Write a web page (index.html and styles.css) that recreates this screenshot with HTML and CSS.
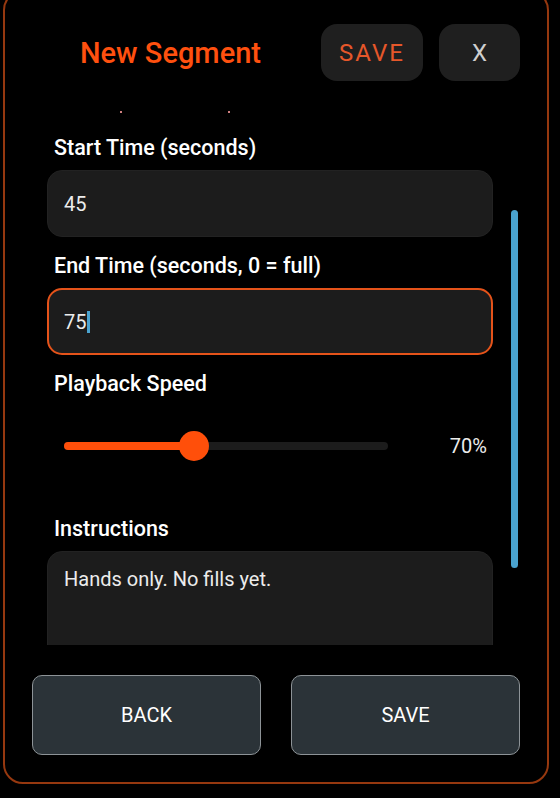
FILE: index.html
```html
<!DOCTYPE html>
<html lang="en">
<head>
  <meta charset="UTF-8">
  <meta name="viewport" content="width=device-width, initial-scale=1.0">
  <title>New Segment</title>
  <link rel="stylesheet" href="styles.css">
</head>
<body>

  <div class="dialog">
    <div class="dialog-header">
      <h1 class="title">New Segment</h1>
      <div class="header-actions">
        <button class="top-btn save">SAVE</button>
        <button class="top-btn close">X</button>
      </div>
    </div>

    <div class="scroll-view">
      <div class="scroll-content">
        <div class="crumbs">
          <span class="crumb"></span>
          <span class="crumb"></span>
        </div>

        <label class="field-label">Start Time (seconds)</label>
        <div class="input">45</div>

        <label class="field-label">End Time (seconds, 0 = full)</label>
        <div class="input focused">75<span class="caret"></span></div>

        <label class="field-label">Playback Speed</label>
        <div class="slider-row">
          <div class="slider">
            <div class="slider-fill" style="width: 40%"></div>
            <div class="slider-thumb" style="left: 40%"></div>
          </div>
          <span class="slider-value">70%</span>
        </div>

        <label class="field-label">Instructions</label>
        <div class="input textarea">Hands only. No fills yet.</div>
      </div>
      <div class="scrollbar"></div>
    </div>

    <div class="dialog-footer">
      <button class="footer-btn">BACK</button>
      <button class="footer-btn">SAVE</button>
    </div>
  </div>

</body>
</html>
```

FILE: styles.css
```css
* {
  margin: 0;
  padding: 0;
  box-sizing: border-box;
}

body {
  background-color: #000;
  color: #fff;
  font-family: Roboto, 'Noto Sans', sans-serif;
  overflow: hidden;
}

.dialog {
  margin: -10px 0 0 3px;
  width: 546px;
  height: 794px;
  border: 2px solid #96380f;
  border-radius: 20px;
  display: flex;
  flex-direction: column;
}

/* Header */
.dialog-header {
  display: flex;
  align-items: flex-start;
  padding: 32px 27px 0 75px;
  height: 103px;
}

.title {
  font-size: 29px;
  font-weight: 500;
  color: #ff500f;
  margin-top: 12px;
}

.header-actions {
  margin-left: auto;
  display: flex;
  gap: 16px;
}

.top-btn {
  height: 57px;
  border: none;
  border-radius: 16px;
  background-color: #1f1f1f;
  font-family: Roboto, sans-serif;
  font-size: 24px;
  cursor: pointer;
}

.top-btn.save {
  width: 102px;
  color: #e6572a;
  letter-spacing: 2px;
}

.top-btn.close {
  width: 81px;
  color: #cfcfcf;
}

/* Scroll area */
.scroll-view {
  position: relative;
  height: 550px;
  overflow: hidden;
}

.scroll-content {
  padding: 0 54px 0 42px;
}

.crumbs {
  height: 31px;
  position: relative;
}

.crumb {
  position: absolute;
  top: 16px;
  width: 2px;
  height: 2px;
  background-color: #d08080;
}

.crumb:first-child {
  left: 73px;
}

.crumb:last-child {
  left: 181px;
}

.field-label {
  display: block;
  font-size: 21.5px;
  font-weight: 500;
  padding-left: 7px;
  height: 44px;
  line-height: 44px;
}

.input {
  height: 67px;
  background-color: #1c1c1c;
  border: 1px solid #222;
  border-radius: 15px;
  padding-left: 16px;
  display: flex;
  align-items: center;
  font-size: 20px;
  color: #ececec;
  margin-bottom: 7px;
}

.input.focused {
  border: 2px solid #e5531a;
  padding-left: 15px;
}

.caret {
  display: inline-block;
  width: 3px;
  height: 22px;
  background-color: #4aa3cf;
  margin-left: 1px;
}

/* Slider */
.slider-row {
  display: flex;
  align-items: center;
  height: 101px;
  padding: 0 6px 22px 17px;
}

.slider {
  position: relative;
  width: 324px;
  height: 8px;
  border-radius: 4px;
  background-color: #1c1c1c;
}

.slider-fill {
  height: 100%;
  border-radius: 4px;
  background-color: #ff4f0a;
}

.slider-thumb {
  position: absolute;
  top: 50%;
  width: 30px;
  height: 30px;
  border-radius: 50%;
  background-color: #ff4f0a;
  transform: translate(-50%, -50%);
}

.slider-value {
  margin-left: auto;
  font-size: 20px;
  color: #ececec;
}

.textarea {
  height: 120px;
  align-items: flex-start;
  padding-top: 15px;
}

.scrollbar {
  position: absolute;
  left: 506px;
  top: 115px;
  width: 7px;
  height: 358px;
  border-radius: 4px;
  background-color: #4aa3cf;
}

/* Footer */
.dialog-footer {
  display: flex;
  gap: 30px;
  padding: 30px 27px 0 27px;
}

.footer-btn {
  flex: 1;
  height: 80px;
  background-color: #2b3338;
  border: 1.5px solid #8d9397;
  border-radius: 10px;
  color: #fff;
  font-family: Roboto, sans-serif;
  font-size: 20px;
  cursor: pointer;
}
```
